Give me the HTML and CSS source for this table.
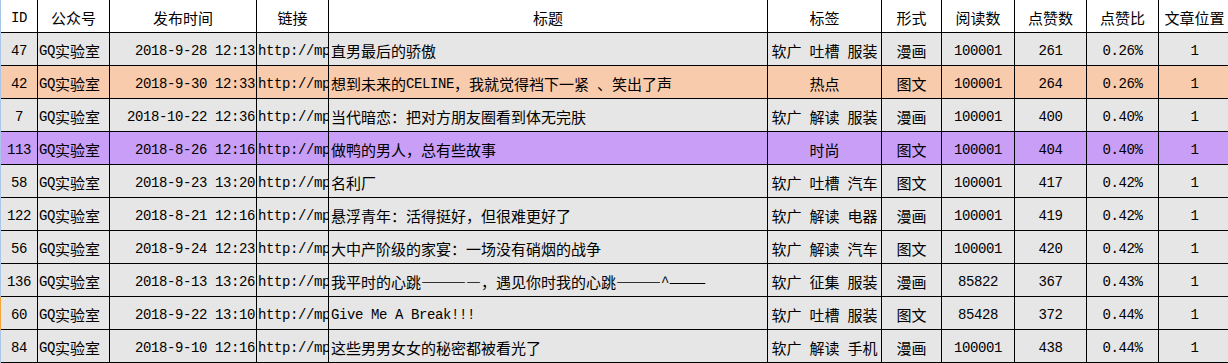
FILE: index.html
```html
<!DOCTYPE html>
<html lang="zh-CN">
<head>
<meta charset="utf-8">
<title>GQ实验室 文章数据</title>
<link rel="stylesheet" href="styles.css">
</head>
<body>
<div class="sheet">
  <div class="row head">
    <div class="c"><span class="en">ID</span></div>
    <div class="c">公众号</div>
    <div class="c">发布时间</div>
    <div class="c">链接</div>
    <div class="c">标题</div>
    <div class="c">标签</div>
    <div class="c">形式</div>
    <div class="c">阅读数</div>
    <div class="c">点赞数</div>
    <div class="c">点赞比</div>
    <div class="c">文章位置</div>
  </div>

  <div class="row">
    <div class="c en">47</div>
    <div class="c l"><span class="en">GQ</span>实验室</div>
    <div class="c r en">2018-9-28 12:13</div>
    <div class="c l link en">http://mp</div>
    <div class="c l t">直男最后的骄傲</div>
    <div class="c tags"><span>软广</span><span>吐槽</span><span>服装</span></div>
    <div class="c">漫画</div>
    <div class="c en">100001</div>
    <div class="c en">261</div>
    <div class="c en">0.26%</div>
    <div class="c en">1</div>
  </div>

  <div class="row peach">
    <div class="c en">42</div>
    <div class="c l"><span class="en">GQ</span>实验室</div>
    <div class="c r en">2018-9-30 12:33</div>
    <div class="c l link en">http://mp</div>
    <div class="c l t">想到未来的<span class="en">CELINE</span>，我就觉得裆下一紧<span class="en">&nbsp;</span>、笑出了声</div>
    <div class="c tags"><span>热点</span></div>
    <div class="c">图文</div>
    <div class="c en">100001</div>
    <div class="c en">264</div>
    <div class="c en">0.26%</div>
    <div class="c en">1</div>
  </div>

  <div class="row">
    <div class="c en">7</div>
    <div class="c l"><span class="en">GQ</span>实验室</div>
    <div class="c r en">2018-10-22 12:36</div>
    <div class="c l link en">http://mp</div>
    <div class="c l t">当代暗恋：把对方朋友圈看到体无完肤</div>
    <div class="c tags"><span>软广</span><span>解读</span><span>服装</span></div>
    <div class="c">漫画</div>
    <div class="c en">100001</div>
    <div class="c en">400</div>
    <div class="c en">0.40%</div>
    <div class="c en">1</div>
  </div>

  <div class="row purple">
    <div class="c en">113</div>
    <div class="c l"><span class="en">GQ</span>实验室</div>
    <div class="c r en">2018-8-26 12:16</div>
    <div class="c l link en">http://mp</div>
    <div class="c l t">做鸭的男人，总有些故事</div>
    <div class="c tags"><span>时尚</span></div>
    <div class="c">图文</div>
    <div class="c en">100001</div>
    <div class="c en">404</div>
    <div class="c en">0.40%</div>
    <div class="c en">1</div>
  </div>

  <div class="row">
    <div class="c en">58</div>
    <div class="c l"><span class="en">GQ</span>实验室</div>
    <div class="c r en">2018-9-23 13:20</div>
    <div class="c l link en">http://mp</div>
    <div class="c l t">名利厂</div>
    <div class="c tags"><span>软广</span><span>吐槽</span><span>汽车</span></div>
    <div class="c">图文</div>
    <div class="c en">100001</div>
    <div class="c en">417</div>
    <div class="c en">0.42%</div>
    <div class="c en">1</div>
  </div>

  <div class="row">
    <div class="c en">122</div>
    <div class="c l"><span class="en">GQ</span>实验室</div>
    <div class="c r en">2018-8-21 12:16</div>
    <div class="c l link en">http://mp</div>
    <div class="c l t">悬浮青年：活得挺好，但很难更好了</div>
    <div class="c tags"><span>软广</span><span>解读</span><span>电器</span></div>
    <div class="c">漫画</div>
    <div class="c en">100001</div>
    <div class="c en">419</div>
    <div class="c en">0.42%</div>
    <div class="c en">1</div>
  </div>

  <div class="row">
    <div class="c en">56</div>
    <div class="c l"><span class="en">GQ</span>实验室</div>
    <div class="c r en">2018-9-24 12:23</div>
    <div class="c l link en">http://mp</div>
    <div class="c l t">大中产阶级的家宴：一场没有硝烟的战争</div>
    <div class="c tags"><span>软广</span><span>解读</span><span>汽车</span></div>
    <div class="c">图文</div>
    <div class="c en">100001</div>
    <div class="c en">420</div>
    <div class="c en">0.42%</div>
    <div class="c en">1</div>
  </div>

  <div class="row">
    <div class="c en">136</div>
    <div class="c l"><span class="en">GQ</span>实验室</div>
    <div class="c r en">2018-8-13 13:26</div>
    <div class="c l link en">http://mp</div>
    <div class="c l t">我平时的心跳————，遇见你时我的心跳———<span class="en">^</span>———</div>
    <div class="c tags"><span>软广</span><span>征集</span><span>服装</span></div>
    <div class="c">漫画</div>
    <div class="c en">85822</div>
    <div class="c en">367</div>
    <div class="c en">0.43%</div>
    <div class="c en">1</div>
  </div>

  <div class="row marked">
    <div class="c en">60</div>
    <div class="c l"><span class="en">GQ</span>实验室</div>
    <div class="c r en">2018-9-22 13:10</div>
    <div class="c l link en">http://mp</div>
    <div class="c l t en">Give Me A Break!!!</div>
    <div class="c tags"><span>软广</span><span>吐槽</span><span>服装</span></div>
    <div class="c">图文</div>
    <div class="c en">85428</div>
    <div class="c en">372</div>
    <div class="c en">0.44%</div>
    <div class="c en">1</div>
  </div>

  <div class="row">
    <div class="c en">84</div>
    <div class="c l"><span class="en">GQ</span>实验室</div>
    <div class="c r en">2018-9-10 12:16</div>
    <div class="c l link en">http://mp</div>
    <div class="c l t">这些男男女女的秘密都被看光了</div>
    <div class="c tags"><span>软广</span><span>解读</span><span>手机</span></div>
    <div class="c">漫画</div>
    <div class="c en">100001</div>
    <div class="c en">438</div>
    <div class="c en">0.44%</div>
    <div class="c en">1</div>
  </div>
</div>
</body>
</html>
```

FILE: styles.css
```css
html, body {
  margin: 0;
  padding: 0;
  background: #ffffff;
  overflow: hidden;
}

.sheet {
  width: 1240px;
  color: #000;
  font-family: "Noto Sans CJK SC", "Noto Sans", sans-serif;
  font-size: 15px;
}

.row {
  display: grid;
  grid-template-columns: 37px 72px 147px 72px 439px 114px 60px 73px 72px 72px 72px;
  height: 33px;
  background: #e6e6e6;
  border-left: 1px solid #a9c6e8;
}

.row.head {
  background: #ffffff;
}

.row.peach {
  background: #f8cbad;
}

.row.purple {
  background: #c89ef6;
}

.row.marked {
  border-left-color: #f2a33a;
}

.c {
  box-sizing: border-box;
  border-right: 1px solid #000;
  border-bottom: 1px solid #000;
  display: flex;
  align-items: center;
  justify-content: center;
  padding-top: 3px;
  white-space: nowrap;
  overflow: hidden;
  line-height: 1;
}

.c.l {
  justify-content: flex-start;
  padding-left: 1px;
}

.c.t {
  padding-left: 2px;
}

.c.r {
  justify-content: flex-end;
  padding-right: 1px;
}

.en {
  font-family: "Liberation Mono", "DejaVu Sans Mono", monospace;
  font-size: 14px;
  letter-spacing: -0.4px;
}

.c.link {
  padding-left: 1px;
}

.tags {
  gap: 8px;
}
```
